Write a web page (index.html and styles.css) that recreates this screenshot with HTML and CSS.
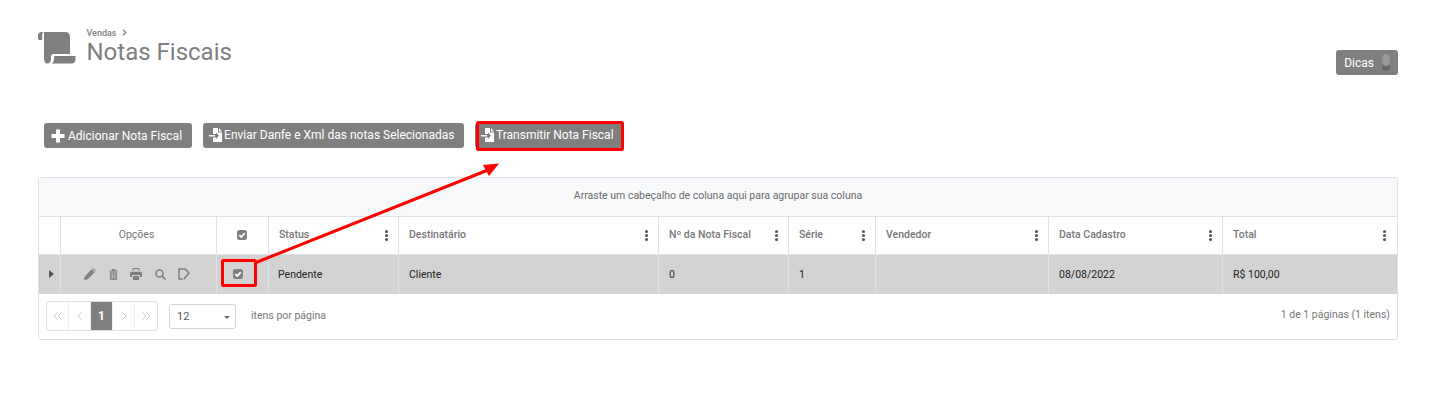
FILE: index.html
```html
<!DOCTYPE html>
<html lang="pt-BR">
<head>
<meta charset="utf-8">
<title>Notas Fiscais</title>
<link rel="stylesheet" href="styles.css">
</head>
<body>
<div class="page">
  <header class="top">
    <svg class="logo" viewBox="0 0 38 32" width="38" height="32"><path fill="#7f7f7f" d="M0 3.500C0 1.500 1.500 0 3.500 0H5.500C4.500 1 4.200 2 4.200 3.500V8H1.500C.7 8 0 7.300 0 6.500Z"/><path fill="#7f7f7f" d="M6 0H27C30 0 32 2 32 5V22H15.500C13.500 22 13 23.500 13 25V27C13 29.500 11.500 31.500 9.500 31.500C7.500 31.500 6 29.500 6 27Z"/><path fill="#7f7f7f" d="M16 24H37.500V27.500C37.500 30 36 31.500 33.500 31.500H13.500C15 30.500 16 29 16 27Z"/></svg>
    <div class="heading">
      <div class="crumb">Vendas <svg class="crumb-sep" viewBox="0 0 5 7" width="5" height="7"><path d="M1 .7L3.800 3.500L1 6.300" fill="none" stroke="#7f7f7f" stroke-width="1.300"/></svg></div>
      <h1 class="title">Notas Fiscais</h1>
    </div>
    <div class="tips">Dicas <span class="toggle"><span class="knob"></span></span></div>
  </header>

  <div class="actions">
    <button class="btn"><svg class="ic" viewBox="0 0 14 14" width="14" height="14"><path fill="#fff" d="M5 .5H9V5H13.500V9H9V13.500H5V9H.5V5H5Z"/></svg>Adicionar Nota Fiscal</button>
    <button class="btn btn-tight"><svg class="ic" viewBox="0 0 14 14" width="14" height="14"><path fill="#fff" d="M4 0H9V4.500H13V14H4V9.500H7V11L10 7.500L7 4.500V6H4Z"/><path fill="#fff" d="M10 0L13 3.500H10ZM0 7H6V8.500H0Z"/></svg>Enviar Danfe e Xml das notas Selecionadas</button>
    <button class="btn btn-tight"><svg class="ic" viewBox="0 0 14 14" width="14" height="14"><path fill="#fff" d="M4 0H9V4.500H13V14H4V9.500H7V11L10 7.500L7 4.500V6H4Z"/><path fill="#fff" d="M10 0L13 3.500H10ZM0 7H6V8.500H0Z"/></svg>Transmitir Nota Fiscal</button>
  </div>

  <section class="grid">
    <div class="group-bar">Arraste um cabeçalho de coluna aqui para agrupar sua coluna</div>
    <div class="row head">
      <div class="cell"></div>
      <div class="cell center head-opts">Opções</div>
      <div class="cell center"><svg class="check" viewBox="0 0 10 10" width="10" height="10"><rect width="10" height="10" rx="2.500" fill="#7f7f7f"/><path d="M2.300 5.200L4.200 7L7.800 3.200" fill="none" stroke="#fff" stroke-width="1.800"/></svg></div>
      <div class="cell">Status<span class="dots"></span></div>
      <div class="cell">Destinatário<span class="dots"></span></div>
      <div class="cell">Nº da Nota Fiscal<span class="dots"></span></div>
      <div class="cell">Série<span class="dots"></span></div>
      <div class="cell">Vendedor<span class="dots"></span></div>
      <div class="cell">Data Cadastro<span class="dots"></span></div>
      <div class="cell">Total<span class="dots dots-last"></span></div>
    </div>
    <div class="row body">
      <div class="cell expand"><svg viewBox="0 0 5 8" width="5" height="8"><path d="M0 0L5 4L0 8Z" fill="#555"/></svg></div>
      <div class="cell opts">
        <svg viewBox="0 0 12 12" width="12" height="12"><path fill="#7f7f7f" d="M0 12L.8 8.300L7.800 1.300L10.700 4.200L3.700 11.200ZM8.600.5Q9.200 0 9.800.5L11.500 2.200Q12 2.800 11.500 3.400L11.400 3.500L8.500 .6Z"/></svg>
        <svg viewBox="0 0 10 12" width="9" height="11"><path fill="#8a8a8a" fill-rule="evenodd" d="M3 0H7V1.500H9.500V3H.5V1.500H3ZM1 3.500H9V11Q9 12 8 12H2Q1 12 1 11ZM3 5V10.500H4V5ZM6 5V10.500H7V5Z"/></svg>
        <svg viewBox="0 0 12 12" width="12" height="12"><path fill="#7f7f7f" d="M2.500 0H9.500V3H8.500V1H3.500V3H2.500ZM1.500 3.800H10.500Q12 3.800 12 5.300V9H10V7H2V9H0V5.300Q0 3.800 1.500 3.800ZM3 8H9V12H3Z"/></svg>
        <svg viewBox="0 0 11 11" width="11" height="11"><circle cx="4.500" cy="4.500" r="3.500" fill="none" stroke="#7f7f7f" stroke-width="1.500"/><path d="M7 7L10.500 10.500" stroke="#7f7f7f" stroke-width="1.700"/></svg>
        <svg viewBox="0 0 12 12" width="12" height="12"><path fill="none" stroke="#7f7f7f" stroke-width="1.500" d="M5 11H1V1H7L11 5L8.500 8"/><path stroke="#7f7f7f" stroke-width="1.500" d="M6 11L9 7.500"/></svg>
      </div>
      <div class="cell center body-check"><svg class="check" viewBox="0 0 10 10" width="10" height="10"><rect width="10" height="10" rx="2.500" fill="#7f7f7f"/><path d="M2.300 5.200L4.200 7L7.800 3.200" fill="none" stroke="#fff" stroke-width="1.800"/></svg></div>
      <div class="cell cell-status">Pendente</div>
      <div class="cell">Cliente</div>
      <div class="cell">0</div>
      <div class="cell">1</div>
      <div class="cell"></div>
      <div class="cell">08/08/2022</div>
      <div class="cell">R$ 100,00</div>
    </div>
    <div class="pager">
      <div class="pages">
        <span class="pg"><svg viewBox="0 0 10 8" width="10" height="8"><path d="M4.500 .5L1 4L4.500 7.500M8.500 .5L5 4L8.500 7.500" fill="none" stroke="#c4c4c4"/></svg></span>
        <span class="pg"><svg viewBox="0 0 6 8" width="6" height="8"><path d="M4.500 .5L1 4L4.500 7.500" fill="none" stroke="#c4c4c4"/></svg></span>
        <span class="pg current">1</span>
        <span class="pg"><svg viewBox="0 0 6 8" width="6" height="8"><path d="M1.500 .5L5 4L1.500 7.500" fill="none" stroke="#c4c4c4"/></svg></span>
        <span class="pg"><svg viewBox="0 0 10 8" width="10" height="8"><path d="M1.500 .5L5 4L1.500 7.500M5.500 .5L9 4L5.500 7.500" fill="none" stroke="#c4c4c4"/></svg></span>
      </div>
      <div class="size">12<span class="caret"></span></div>
      <span class="per">itens por página</span>
      <span class="info">1 de 1 páginas (1 itens)</span>
    </div>
  </section>

  <svg class="marks" viewBox="0 0 1439 401" width="1439" height="401">
    <g fill="none" stroke="#f00">
      <rect x="477.500" y="122.500" width="145" height="27" rx="1" stroke-width="3"/>
      <rect x="222.500" y="260.500" width="33" height="25" rx="1" stroke-width="3"/>
      <path d="M256 262.500L488 170" stroke-width="3"/>
    </g>
    <path d="M499 163.500L483 165L489 176Z" fill="#f00"/>
  </svg>
</div>
</body>
</html>
```

FILE: styles.css
```css
* { box-sizing: border-box; }
html, body { margin: 0; background: #fff; }
body { font-family: Roboto, "Liberation Sans", sans-serif; overflow: hidden; }
.page { position: relative; width: 1439px; height: 401px; padding: 27px 41px 0 38px; }

.top { display: flex; align-items: flex-start; height: 96px; }
.logo { margin-top: 5px; flex: none; }
.heading { margin-left: 10.5px; padding-top: 1px; }
.crumb { font-size: 9px; line-height: 11px; font-weight: 500; color: #7f7f7f; }
.crumb-sep { margin-left: 3px; }
.title { margin: -2px 0 0; font-size: 24px; line-height: 30px; font-weight: 400; color: #7f7f7f; }
.tips { display: flex; align-items: center; margin-left: auto; margin-top: 23px; height: 25px; padding: 0 8px 0 8px; gap: 8px; background: #7f7f7f; border-radius: 3px; color: #fff; font-size: 12px; font-weight: 400; }
.toggle { width: 8px; height: 17px; background: #666; border-radius: 4px; }
.knob { display: block; width: 8px; height: 12px; border-radius: 4px; background: #999; }

.actions { display: flex; gap: 11px; padding-left: 6px; height: 54px; }
.btn { display: flex; align-items: center; height: 25px; padding: 0 10px 0 7px; border: 0; border-radius: 3px; background: #7f7f7f; color: #fff; font: 400 12px Roboto, sans-serif; white-space: nowrap; }
.btn .ic { margin-right: 3px; flex: none; }
.btn-tight { padding: 0 9.5px 1px 6px; }
.btn-tight .ic { margin-right: 1px; }

.grid { width: 1360px; height: 163px; border: 1px solid #dee2e6; border-radius: 3px; color: #6c757d; font-size: 10.5px; }
.group-bar { height: 39px; background: #f8f9fa; border-bottom: 1px solid #dee2e6; text-align: center; line-height: 36px; color: #6b6b6b; }
.row { display: grid; grid-template-columns: 22px 156px 52px 130px 260px 130px 87px 173px 174px 174px; }
.head { height: 38px; border-bottom: 1px solid #dee2e6; color: #777; }
.head .cell { padding-bottom: 2px; }
.head .center { padding-right: 1px; }
.head .head-opts { padding-right: 4px; }
.body { height: 39px; background: #d3d3d3; color: #222; }
.cell { position: relative; display: flex; align-items: center; padding-left: 10px; border-right: 1px solid #dee2e6; font-weight: 500; }
.row .cell:last-child { border-right: 0; }
.body .cell { font-weight: 400; padding-bottom: 1px; }
.body .cell-status { padding-left: 9px; }
.center { justify-content: center; padding-left: 0; font-weight: 400; }
.expand { padding-left: 10px; }
.opts { gap: 12.5px; padding-left: 23px; }
.body-check { padding-right: 9px; }
.dots { position: absolute; right: 10px; top: 50%; width: 3px; height: 3px; margin-top: -6px; background: #555; border-radius: 50%; box-shadow: 0 4px 0 #555, 0 8px 0 #555; }
.dots-last { right: 11px; }

.pager { display: flex; align-items: center; height: 45px; padding: 0 7px 1px; }
.pages { display: flex; height: 30px; border: 1px solid #dee2e6; border-radius: 3px; }
.pg { display: flex; align-items: center; justify-content: center; width: 22px; border-right: 1px solid #eceff1; }
.pg:last-child { border-right: 0; }
.current { background: #7f7f7f; color: #fff; font-size: 12px; font-weight: 700; }
.size { position: relative; display: flex; align-items: center; width: 67px; height: 25px; margin-left: 11px; padding-left: 7px; border: 1px solid #ced4da; border-radius: 3px; font-size: 11px; color: #555; }
.caret { position: absolute; right: 5px; top: 11px; border: 3px solid transparent; border-top-color: #666; }
.per { margin-left: 15px; margin-top: -2px; color: #777; }
.info { margin-left: auto; margin-top: -3px; color: #777; }

.marks { position: absolute; left: 0; top: 0; pointer-events: none; }
```
